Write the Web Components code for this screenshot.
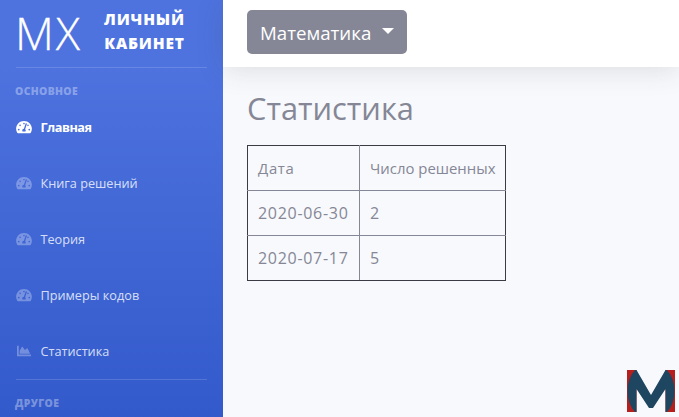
<!DOCTYPE html>
<html lang="ru">
<head>
<meta charset="utf-8">
<title>Статистика</title>
<style>
  html, body { margin: 0; height: 100%; overflow: hidden; }
  body { font-family: "Open Sans", "Noto Sans", sans-serif; color: #858796; background: #f8f9fc; }
</style>
</head>
<body>
<template id="tachometer">
  <svg viewBox="0 0 576 512" width="16" height="14"><path fill="currentColor" d="M288 32C128.94 32 0 160.94 0 320c0 52.8 14.25 102.26 39.06 144.8 5.61 9.62 16.3 15.2 27.44 15.2h443c11.14 0 21.83-5.58 27.44-15.2C561.75 422.26 576 372.8 576 320c0-159.06-128.94-288-288-288zm0 64c14.71 0 26.58 10.13 30.32 23.65-1.11 2.26-2.64 4.23-3.45 6.67l-9.22 27.67c-5.13 3.49-10.97 6.01-17.64 6.01-17.67 0-32-14.33-32-32S270.33 96 288 96zM96 384c-17.67 0-32-14.33-32-32s14.33-32 32-32 32 14.33 32 32-14.33 32-32 32zm48-160c-17.67 0-32-14.33-32-32s14.33-32 32-32 32 14.33 32 32-14.33 32-32 32zm246.77-72.41l-61.33 184C343.13 347.33 352 364.54 352 384c0 11.72-3.38 22.55-8.88 32H232.88c-5.5-9.45-8.88-20.28-8.88-32 0-33.94 26.5-61.43 59.9-63.59l61.34-184.01c4.17-12.56 17.73-19.45 30.36-15.17 12.57 4.19 19.35 17.77 15.17 30.36zm14.66 57.2l15.52-46.55c3.47-1.29 7.13-2.23 11.05-2.23 17.67 0 32 14.33 32 32s-14.33 32-32 32c-11.38-.01-20.89-6.28-26.57-15.22zM480 384c-17.67 0-32-14.33-32-32s14.33-32 32-32 32 14.33 32 32-14.33 32-32 32z"/></svg>
</template>
<template id="chart">
  <svg viewBox="0 0 512 512" width="16" height="14"><path fill="currentColor" d="M500 384c6.6 0 12 5.4 12 12v40c0 6.6-5.4 12-12 12H12c-6.6 0-12-5.4-12-12V76c0-6.6 5.4-12 12-12h40c6.6 0 12 5.4 12 12v308h436zM372.7 159.5L288 216l-85.3-113.7c-5.1-6.8-15.5-6.3-19.9 1L96 248v104h384l-89.9-187.8c-3.2-6.5-11.4-8.7-17.4-4.7z"/></svg>
</template>

<mx-app>
  <mx-sidebar slot="sidebar">
    <mx-nav-heading>Основное</mx-nav-heading>
    <mx-nav-item icon="tachometer" active>Главная</mx-nav-item>
    <mx-nav-item icon="tachometer">Книга решений</mx-nav-item>
    <mx-nav-item icon="tachometer">Теория</mx-nav-item>
    <mx-nav-item icon="tachometer">Примеры кодов</mx-nav-item>
    <mx-nav-item icon="chart">Статистика</mx-nav-item>
    <mx-divider></mx-divider>
    <mx-nav-heading>Другое</mx-nav-heading>
  </mx-sidebar>
  <mx-topbar slot="topbar"><mx-dropdown>Математика</mx-dropdown></mx-topbar>
  <mx-stats-page>
    <mx-stats-table></mx-stats-table>
  </mx-stats-page>
  <mx-logo slot="overlay"></mx-logo>
</mx-app>

<script>
class MxApp extends HTMLElement {
  constructor() {
    super();
    this.attachShadow({ mode: 'open' }).innerHTML = `
      <style>
        :host { display: flex; height: 100vh; overflow: hidden; position: relative; }
        .main { flex: 1; min-width: 0; display: flex; flex-direction: column; }
        .content { flex: 1; }
      </style>
      <slot name="sidebar"></slot>
      <div class="main">
        <slot name="topbar"></slot>
        <div class="content"><slot></slot></div>
      </div>
      <slot name="overlay"></slot>`;
  }
}

class MxSidebar extends HTMLElement {
  constructor() {
    super();
    this.attachShadow({ mode: 'open' }).innerHTML = `
      <style>
        :host {
          display: block; flex: none; width: 223px; overflow: hidden;
          background: linear-gradient(180deg, #4e73df 10%, #224abe 100%) no-repeat;
          background-size: 100% 640px;
        }
        .brand { display: flex; align-items: center; height: 67px; box-sizing: border-box; padding-left: 15px; color: #fff; }
        .mx {
          font-size: 45px; font-weight: 300; line-height: 1; width: 67px; white-space: nowrap;
          letter-spacing: 2px; -webkit-text-stroke: .3px #fff; margin-bottom: 2px;
        }
        .cab {
          flex: 1; margin-right: 16px; margin-bottom: 5px; text-align: center; text-transform: uppercase;
          font-size: 15.5px; font-weight: 800; line-height: 24px; letter-spacing: .8px;
        }
      </style>
      <div class="brand">
        <div class="mx">МХ</div>
        <div class="cab">Личный<br>кабинет</div>
      </div>
      <mx-divider></mx-divider>
      <slot></slot>`;
  }
}

class MxDivider extends HTMLElement {
  constructor() {
    super();
    this.attachShadow({ mode: 'open' }).innerHTML = `
      <style>
        :host { display: block; height: 1px; margin: 0 16px; background: rgba(255,255,255,.15); }
      </style>`;
  }
}

class MxNavHeading extends HTMLElement {
  constructor() {
    super();
    this.attachShadow({ mode: 'open' }).innerHTML = `
      <style>
        :host {
          display: block; padding: 16px 15px 0; height: 15px; line-height: 15px;
          font-size: 10.4px; font-weight: 800; text-transform: uppercase; letter-spacing: .35px;
          color: rgba(255,255,255,.35);
        }
      </style>
      <slot></slot>`;
  }
}

class MxNavItem extends HTMLElement {
  constructor() {
    super();
    const icon = document.getElementById(this.getAttribute('icon'));
    this.attachShadow({ mode: 'open' }).innerHTML = `
      <style>
        :host {
          display: flex; align-items: center; height: 56px; padding-left: 16px;
          font-size: 12.7px; color: rgba(255,255,255,.8);
        }
        :host([active]) { color: #fff; font-weight: 700; letter-spacing: -.5px; }
        .icon { display: flex; width: 24.5px; color: rgba(255,255,255,.3); }
        :host([active]) .icon { color: #fff; }
      </style>
      <span class="icon">${icon.innerHTML}</span>
      <span><slot></slot></span>`;
  }
}

class MxTopbar extends HTMLElement {
  constructor() {
    super();
    this.attachShadow({ mode: 'open' }).innerHTML = `
      <style>
        :host {
          display: flex; align-items: flex-start; flex: none; height: 67px; box-sizing: border-box;
          padding: 10px 24px 0; background: #fff; box-shadow: 0 2.4px 28px 0 rgba(58,59,69,.15);
          position: relative;
        }
      </style>
      <slot></slot>`;
  }
}

class MxDropdown extends HTMLElement {
  constructor() {
    super();
    this.attachShadow({ mode: 'open' }).innerHTML = `
      <style>
        :host {
          display: inline-flex; align-items: center; height: 44px; box-sizing: border-box;
          padding: 0 13px; background: #858796; color: #fff; border-radius: 5px;
          font-size: 18.7px;
        }
        .caret {
          margin-left: 11px; margin-top: -2px; width: 0; height: 0;
          border-top: 6px solid #fff; border-left: 6px solid transparent; border-right: 6px solid transparent;
        }
      </style>
      <slot></slot><span class="caret"></span>`;
  }
}

class MxStatsPage extends HTMLElement {
  constructor() {
    super();
    this.attachShadow({ mode: 'open' }).innerHTML = `
      <style>
        :host { display: block; padding: 24px 24px 0; }
        h1 { margin: 0 0 20px; font-size: 30.8px; font-weight: 400; line-height: 34px; color: #858796; }
      </style>
      <h1>Статистика</h1>
      <slot></slot>`;
  }
}

class MxStatsTable extends HTMLElement {
  constructor() {
    super();
    const rows = [['Дата', 'Число решенных'], ['2020-06-30', '2'], ['2020-07-17', '5']];
    const body = rows.map((r, i) => `<tr>${r.map(c => `<td class="${i ? 'val' : 'head'}">${c}</td>`).join('')}</tr>`).join('');
    this.attachShadow({ mode: 'open' }).innerHTML = `
      <style>
        :host { display: block; }
        table { border-collapse: collapse; border: 1px solid #3a3b45; color: #858796; }
        td { height: 45px; padding: 0 10px; box-sizing: border-box; border: 1px solid #858796; white-space: nowrap; }
        .head { font-size: 14.9px; }
        .head:first-child { letter-spacing: .7px; }
        .val { font-size: 16px; letter-spacing: .7px; }
        tr:first-child td { border-top-color: #3a3b45; }
        tr:last-child td { border-bottom-color: #3a3b45; }
        td:first-child { border-left-color: #3a3b45; width: 112px; }
        td:last-child { border-right-color: #3a3b45; width: 146px; padding-right: 9px; }
      </style>
      <table>${body}</table>`;
  }
}

class MxLogo extends HTMLElement {
  constructor() {
    super();
    this.attachShadow({ mode: 'open' }).innerHTML = `
      <style>
        :host { display: block; position: absolute; right: 4px; bottom: 5px; width: 48px; height: 42px; }
        svg { display: block; }
      </style>
      <svg viewBox="0 0 48 42" width="48" height="42">
        <rect x="0" y="0" width="9.5" height="42" fill="#b5201f"/>
        <rect x="38.5" y="0" width="9.5" height="42" fill="#b5201f"/>
        <path fill="#1f4660" d="M8 0h1.5L24 25 38.5 0H40q7.500 8 7.500 21T40 42h-1.500V19L26 38h-4L9.500 19v23H8Q.5 34 .5 21T8 0z"/>
      </svg>`;
  }
}

customElements.define('mx-app', MxApp);
customElements.define('mx-sidebar', MxSidebar);
customElements.define('mx-divider', MxDivider);
customElements.define('mx-nav-heading', MxNavHeading);
customElements.define('mx-nav-item', MxNavItem);
customElements.define('mx-topbar', MxTopbar);
customElements.define('mx-dropdown', MxDropdown);
customElements.define('mx-stats-page', MxStatsPage);
customElements.define('mx-stats-table', MxStatsTable);
customElements.define('mx-logo', MxLogo);
</script>
</body>
</html>
